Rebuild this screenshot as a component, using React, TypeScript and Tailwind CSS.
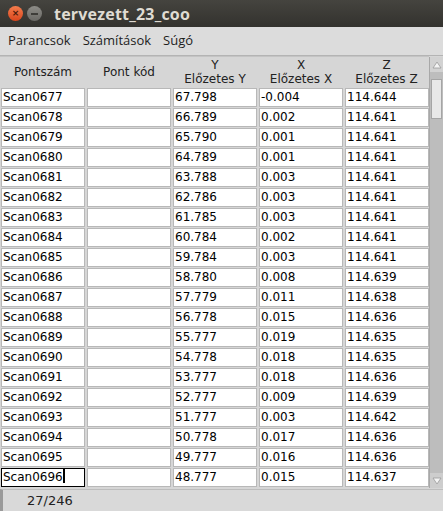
import React from 'react';

type Sor = { pont: string; y: string; x: string; z: string };

const sorok: Sor[] = [
  { pont: 'Scan0677', y: '67.798', x: '-0.004', z: '114.644' },
  { pont: 'Scan0678', y: '66.789', x: '0.002', z: '114.641' },
  { pont: 'Scan0679', y: '65.790', x: '0.001', z: '114.641' },
  { pont: 'Scan0680', y: '64.789', x: '0.001', z: '114.641' },
  { pont: 'Scan0681', y: '63.788', x: '0.003', z: '114.641' },
  { pont: 'Scan0682', y: '62.786', x: '0.003', z: '114.641' },
  { pont: 'Scan0683', y: '61.785', x: '0.003', z: '114.641' },
  { pont: 'Scan0684', y: '60.784', x: '0.002', z: '114.641' },
  { pont: 'Scan0685', y: '59.784', x: '0.003', z: '114.641' },
  { pont: 'Scan0686', y: '58.780', x: '0.008', z: '114.639' },
  { pont: 'Scan0687', y: '57.779', x: '0.011', z: '114.638' },
  { pont: 'Scan0688', y: '56.778', x: '0.015', z: '114.636' },
  { pont: 'Scan0689', y: '55.777', x: '0.019', z: '114.635' },
  { pont: 'Scan0690', y: '54.778', x: '0.018', z: '114.635' },
  { pont: 'Scan0691', y: '53.777', x: '0.018', z: '114.636' },
  { pont: 'Scan0692', y: '52.777', x: '0.009', z: '114.639' },
  { pont: 'Scan0693', y: '51.777', x: '0.003', z: '114.642' },
  { pont: 'Scan0694', y: '50.778', x: '0.017', z: '114.636' },
  { pont: 'Scan0695', y: '49.777', x: '0.016', z: '114.636' },
  { pont: 'Scan0696', y: '48.777', x: '0.015', z: '114.637' },
];

const Cella: React.FC<{ szoveg?: string; aktiv?: boolean }> = ({ szoveg, aktiv }) => (
  <div
    className={`h-[19px] bg-white pl-[1px] leading-[17px] whitespace-nowrap overflow-hidden border ${
      aktiv ? 'border-black' : 'border-[#b8b8b8]'
    }`}
  >
    {szoveg}
    {aktiv && <span className="inline-block w-[2px] h-[14px] bg-black align-[-2px]" />}
  </div>
);

const Fejlec: React.FC<{ felso?: string; also: string }> = ({ felso, also }) => (
  <div className="flex flex-col items-center justify-center leading-[14px] text-[#222]">
    {felso && <span>{felso}</span>}
    <span>{also}</span>
  </div>
);

export default function App() {
  return (
    <div
      className="w-[443px] h-[511px] flex flex-col bg-[#d6d6d6] overflow-hidden text-[12px] text-black"
      style={{ fontFamily: '"DejaVu Sans", sans-serif' }}
    >
      {/* címsor */}
      <div className="h-[27px] flex items-center bg-gradient-to-b from-[#45443f] to-[#33322e] pl-[8px]">
        <div className="w-[15px] h-[15px] rounded-full bg-gradient-to-b from-[#f47c4c] to-[#d9441b] flex items-center justify-center text-[9px] leading-none text-[#4a1a0a] font-bold">
          ×
        </div>
        <div className="w-[15px] h-[15px] rounded-full bg-gradient-to-b from-[#8d8c87] to-[#6a6965] ml-[4px] flex items-center justify-center">
          <span className="w-[7px] h-[2px] bg-[#3e3d39]" />
        </div>
        <span
          className="ml-[12px] text-[16px] font-bold text-[#dfdbd2] tracking-[0.2px]"
          style={{ fontFamily: '"Open Sans", sans-serif' }}
        >
          tervezett_23_coo
        </span>
      </div>

      {/* menü */}
      <div
        className="h-[29px] flex items-center gap-[12px] pl-[8px] bg-[#dcdcdc] border-b border-[#b4b4b4] text-[13px] text-[#1e1e1e]"
        style={{ fontFamily: '"Open Sans", sans-serif' }}
      >
        <span>Parancsok</span>
        <span>Számítások</span>
        <span>Súgó</span>
      </div>

      {/* táblázat */}
      <div className="flex flex-1 min-h-0">
        <div className="w-[429px] flex flex-col">
          <div className="h-[31px] grid grid-cols-[86px_86px_86px_86px_85px] items-center border-t border-[#c4c4c4]">
            <Fejlec also="Pontszám" />
            <Fejlec also="Pont kód" />
            <Fejlec felso="Y" also="Előzetes Y" />
            <Fejlec felso="X" also="Előzetes X" />
            <Fejlec felso="Z" also="Előzetes Z" />
          </div>
          <div className="flex flex-col gap-[1px] pl-[1px] pt-[1px]">
            {sorok.map((s, i) => (
              <div key={s.pont} className="grid grid-cols-[84px_84px_84px_84px_84px] gap-x-[2px]">
                <Cella szoveg={s.pont} aktiv={i === sorok.length - 1} />
                <Cella />
                <Cella szoveg={s.y} />
                <Cella szoveg={s.x} />
                <Cella szoveg={s.z} />
              </div>
            ))}
          </div>
        </div>

        {/* görgetősáv */}
        <div className="w-[14px] mt-[1px] mb-[1px] flex flex-col bg-[#bdbdbd] border-l border-[#a8a8a8]">
          <div className="h-[15px] flex items-center justify-center bg-[#d2d2d2]">
            <svg width="10" height="8" viewBox="0 0 10 8">
              <path d="M5 1 L9 7 L1 7 Z" fill="#f4f4f4" stroke="#9a9a9a" strokeWidth="0.8" />
            </svg>
          </div>
          <div className="mt-[7px] h-[40px] mx-[1px] bg-[#e8e8e8] border border-[#a5a5a5]" />
          <div className="flex-1" />
          <div className="h-[15px] flex items-center justify-center bg-[#cdcdcd]">
            <svg width="10" height="8" viewBox="0 0 10 8">
              <path d="M1 1 L9 1 L5 7 Z" fill="#f4f4f4" stroke="#9a9a9a" strokeWidth="0.8" />
            </svg>
          </div>
        </div>
      </div>

      {/* állapotsor */}
      <div className="h-[22px] flex items-center bg-[#d9d9d9] border-t border-[#bdbdbd] border-l-[3px] border-l-[#9a9a9a] pl-[24px] text-[13px] text-[#222]">
        27/246
      </div>
    </div>
  );
}
